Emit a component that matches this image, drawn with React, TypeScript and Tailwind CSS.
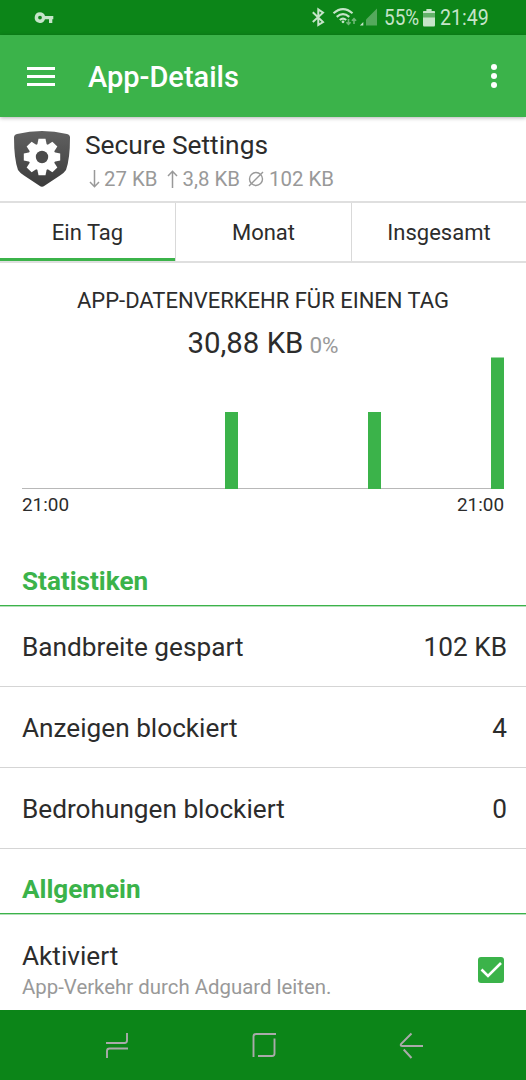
import React from "react";

const TEETH = [0, 45, 90, 135, 180, 225, 270, 315];

function StatusBar() {
  return (
    <div className="flex h-[35px] shrink-0 items-center bg-[#0c8518] text-[#c5e4c8]">
      <svg className="ml-[34px] h-[14px] w-[21px]" viewBox="0 0 21 14" fill="currentColor">
        <path
          fillRule="evenodd"
          d="M6 1.300A5.300 5.300 0 1 0 11 8.300h4v3.700h3.300V8.300h1V5H11A5.300 5.300 0 0 0 6 1.300ZM6 4.700A1.900 1.900 0 1 1 6 8.500A1.900 1.900 0 1 1 6 4.700Z"
        />
      </svg>
      <svg className="ml-[256px] h-[35px] w-[70px]" viewBox="311 0 70 35" fill="none" stroke="currentColor">
        <path strokeWidth="2" d="M312.800 12.200 323 22 318.300 25V9.500L323 12.700 312.800 22" />
        <path strokeWidth="2.100" d="M333.500 13.200Q343 5 352.500 13.200M336.700 16.900Q343 11.500 349.300 16.900M339.800 20Q343 17.300 346.200 20" />
        <circle cx="343" cy="21.800" r="1.400" fill="currentColor" stroke="none" />
        <path stroke="#6fb776" strokeWidth="1.600" d="M348.500 19V24.500M346.400 22.200 348.500 24.400 350.600 22.200M354 24V18.500M351.900 20.700 354 18.600 356.100 20.700" />
        <path fill="currentColor" stroke="none" d="M363.300 22V25.500H359.800Z" />
        <path fill="#55a95d" stroke="none" d="M377 8.500V25.500H366V19.500Z" />
      </svg>
      <span className="ml-[3px] w-[36px] origin-left scale-x-[0.88] text-[21.500px] leading-[35px]">55%</span>
      <svg className="ml-[3px] h-[18px] w-[12px]" viewBox="0 0 12 18">
        <path fill="#62b169" d="M3.500 0H8.500V2H11Q12 2 12 3V9H0V3Q0 2 1 2H3.500Z" />
        <path fill="currentColor" d="M3.500 0H8.500V2H11Q12 2 12 3V4H0V3Q0 2 1 2H3.500ZM0 8.500H12V16Q12 17.500 11 17.500H1Q0 17.500 0 16Z" />
      </svg>
      <span className="ml-[5px] origin-left scale-x-[0.91] text-[21.500px] leading-[35px]">21:49</span>
    </div>
  );
}

function AppBar() {
  return (
    <div className="z-10 flex h-[82px] shrink-0 items-center bg-[#3bb34a] pl-[27px] text-white shadow-[0_1px_4px_rgba(0,0,0,0.3)]">
      <div className="flex w-[28px] flex-col gap-[5px]">
        <span className="h-[3px] bg-white" />
        <span className="h-[3px] bg-white" />
        <span className="h-[3px] bg-white" />
      </div>
      <h1 className="ml-[33px] pt-[2px] text-[29px] font-medium leading-[34px]">App-Details</h1>
      <div className="ml-auto mr-[29px] flex flex-col gap-[3px]">
        <span className="size-[6px] rounded-full bg-white" />
        <span className="size-[6px] rounded-full bg-white" />
        <span className="size-[6px] rounded-full bg-white" />
      </div>
    </div>
  );
}

function ShieldIcon() {
  return (
    <svg className="ml-[14px] mt-[13px] h-[58px] w-[57px] shrink-0" viewBox="0 0 57 58">
      <defs>
        <linearGradient id="shield" x1="0" y1="0" x2="0" y2="1">
          <stop offset="0" stopColor="#616161" />
          <stop offset="1" stopColor="#3c3c3c" />
        </linearGradient>
      </defs>
      <path
        fill="url(#shield)"
        d="M3 4Q28 -2 53 4Q56 4.500 56 7.500Q56 29 52 40Q50 43 46 45.500L30.500 55.800Q28 57.500 25.500 55.800L10 45.500Q6 43 4 40Q0 29 0 7.500Q0 4.500 3 4Z"
      />
      <g fill="#fff">
        <circle cx="28" cy="27" r="13.500" />
        {TEETH.map((angle) => (
          <path key={angle} transform={`rotate(${angle} 28 27)`} d="M23 16 24.500 8.800H31.500L33 16Z" />
        ))}
      </g>
      <circle cx="28" cy="27" r="6.200" fill="#4b4b4b" />
    </svg>
  );
}

function AppHeader() {
  return (
    <div className="flex h-[84px] shrink-0">
      <ShieldIcon />
      <div className="ml-[14px] pt-[11px]">
        <div className="text-[26.300px] leading-[34px]">Secure Settings</div>
        <div className="flex items-center pl-[4px] text-[20.400px] leading-[34px] text-[#999]">
          <svg className="h-[18px] w-[11px]" viewBox="0 0 11 18" fill="none" stroke="currentColor" strokeWidth="1.500">
            <path d="M5.500 0V16.500M1 12 5.500 16.700 10 12" />
          </svg>
          <span className="ml-[4px]">27 KB</span>
          <svg className="ml-[10px] h-[18px] w-[11px]" viewBox="0 0 11 18" fill="none" stroke="currentColor" strokeWidth="1.500">
            <path d="M5.500 18V1.500M1 6 5.500 1.300 10 6" />
          </svg>
          <span className="ml-[4px]">3,8 KB</span>
          <svg className="ml-[8px] size-[16px]" viewBox="0 0 16 16" fill="none" stroke="currentColor" strokeWidth="1.400">
            <circle cx="8" cy="8" r="6.500" />
            <path d="M1 15 15 1" />
          </svg>
          <span className="ml-[5px]">102 KB</span>
        </div>
      </div>
    </div>
  );
}

function Tabs() {
  return (
    <div className="grid h-[62px] shrink-0 grid-cols-[175px_176px_175px] grid-rows-[58px] border-y-2 border-[#dfdfdf] text-center text-[22px] leading-[60px]">
      <div className="h-[58px] border-b-[3px] border-[#3bb34a]">Ein Tag</div>
      <div className="h-[58px] border-l border-[#d9d9d9]">Monat</div>
      <div className="h-[58px] border-l border-[#d9d9d9]">Insgesamt</div>
    </div>
  );
}

function TrafficChart() {
  return (
    <div className="flex h-[286px] shrink-0 flex-col px-[22px] pt-[21px]">
      <h2 className="text-center text-[22px] leading-[34px]">APP-DATENVERKEHR FÜR EINEN TAG</h2>
      <div className="mt-[5px] flex justify-center gap-[6px] text-[29.400px] leading-[40px]">
        <span>30,88 KB</span>
        <span className="pt-[2px] text-[22.500px] text-[#999]">0%</span>
      </div>
      <svg className="-mt-[8px] h-[132px] w-[482px] shrink-0" viewBox="0 0 482 132">
        <path stroke="#b8b8b8" d="M0 131.500H482" />
        <path fill="#3bb34a" d="M203 55H216V132H203ZM346 55H359V132H346ZM469 0.500H482V132H469Z" />
      </svg>
      <div className="flex justify-between text-[18.900px] leading-[32px]">
        <span>21:00</span>
        <span>21:00</span>
      </div>
    </div>
  );
}

function SectionTitle({ children }: { children: React.ReactNode }) {
  return (
    <h3 className="flex h-[57px] shrink-0 items-end border-b border-[#3bb34a] px-[22px] pb-[8px] text-[26.100px] font-bold leading-[32px] text-[#3bb34a] shadow-[0_1px_0_#b5e0ba]">
      {children}
    </h3>
  );
}

function StatRow({ label, value }: { label: string; value: string }) {
  return (
    <div className="flex h-[81px] shrink-0 items-center justify-between border-b border-[#d5d5d5] pl-[22px] pr-[19px] pt-[2px] text-[26.200px] leading-[34px]">
      <span>{label}</span>
      <span>{value}</span>
    </div>
  );
}

function NavBar() {
  return (
    <div className="flex h-[70px] shrink-0 items-center bg-[#0c8518]">
      <svg className="ml-[105px] h-[28px] w-[24px]" viewBox="0 0 24 28" fill="none" stroke="#aaaaaa" strokeWidth="1.900">
        <path d="M1 12H19.500Q22 12 22 9.500V2M23 17.500H4.500Q2 17.500 2 20V27" />
      </svg>
      <svg className="ml-[123px] size-[26px]" viewBox="0 0 26 26" fill="none" stroke="#aaaaaa" strokeWidth="1.900">
        <path d="M1.500 25V4.500Q1.500 2 4 2H24M22.500 6.500V21.500Q22.500 24 20 24H6" />
      </svg>
      <svg className="ml-[121px] h-[28px] w-[26px]" viewBox="0 0 26 28" fill="none" stroke="#aaaaaa" strokeWidth="2">
        <path d="M12.500 2.500 2.200 12.800Q.8 15 3.500 15H24M4.700 18.500 12.500 27" />
      </svg>
    </div>
  );
}

export default function App() {
  return (
    <div className="flex h-[1080px] w-[526px] flex-col overflow-hidden whitespace-nowrap bg-white font-[Roboto,sans-serif] text-[#2c2c2c]">
      <StatusBar />
      <AppBar />
      <AppHeader />
      <Tabs />
      <TrafficChart />
      <SectionTitle>Statistiken</SectionTitle>
      <StatRow label="Bandbreite gespart" value="102 KB" />
      <StatRow label="Anzeigen blockiert" value="4" />
      <StatRow label="Bedrohungen blockiert" value="0" />
      <div className="flex h-[161px] shrink-0 flex-col pt-[8px]">
        <SectionTitle>Allgemein</SectionTitle>
        <div className="flex items-start justify-between px-[22px] pt-[25px]">
          <div>
            <div className="text-[26.200px] leading-[34px]">Aktiviert</div>
            <div className="text-[20.400px] leading-[28px] text-[#999]">App-Verkehr durch Adguard leiten.</div>
          </div>
          <div className="mt-[18px] grid size-[26px] place-items-center rounded-[3px] bg-[#3bb34a]">
            <svg className="size-[26px]" viewBox="0 0 26 26" fill="none" stroke="#fff" strokeWidth="2.600">
              <path d="M3.500 12.500 10 19 23 6" />
            </svg>
          </div>
        </div>
      </div>
      <NavBar />
    </div>
  );
}
